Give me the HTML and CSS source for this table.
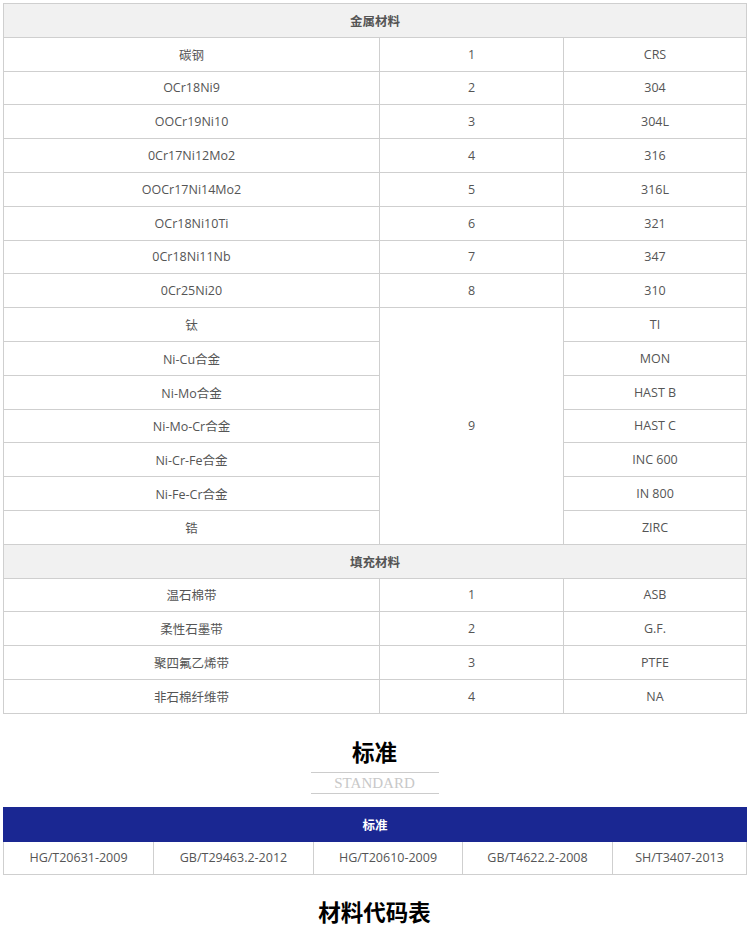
FILE: index.html
```html
<!DOCTYPE html>
<html lang="zh">
<head>
<meta charset="utf-8">
<title>材料代码表</title>
<link rel="stylesheet" href="styles.css">
</head>
<body>
<div class="page">
  <table class="mat">
    <colgroup><col class="c1"><col class="c2"><col class="c3"></colgroup>
    <tr class="head"><td colspan="3">金属材料</td></tr>
    <tr><td>碳钢</td><td>1</td><td>CRS</td></tr>
    <tr><td>OCr18Ni9</td><td>2</td><td>304</td></tr>
    <tr><td>OOCr19Ni10</td><td>3</td><td>304L</td></tr>
    <tr><td>0Cr17Ni12Mo2</td><td>4</td><td>316</td></tr>
    <tr><td>OOCr17Ni14Mo2</td><td>5</td><td>316L</td></tr>
    <tr><td>OCr18Ni10Ti</td><td>6</td><td>321</td></tr>
    <tr><td>0Cr18Ni11Nb</td><td>7</td><td>347</td></tr>
    <tr><td>0Cr25Ni20</td><td>8</td><td>310</td></tr>
    <tr><td>钛</td><td rowspan="7">9</td><td>TI</td></tr>
    <tr><td>Ni-Cu合金</td><td>MON</td></tr>
    <tr><td>Ni-Mo合金</td><td>HAST B</td></tr>
    <tr><td>Ni-Mo-Cr合金</td><td>HAST C</td></tr>
    <tr><td>Ni-Cr-Fe合金</td><td>INC 600</td></tr>
    <tr><td>Ni-Fe-Cr合金</td><td>IN 800</td></tr>
    <tr><td>锆</td><td>ZIRC</td></tr>
    <tr class="head"><td colspan="3">填充材料</td></tr>
    <tr><td>温石棉带</td><td>1</td><td>ASB</td></tr>
    <tr><td>柔性石墨带</td><td>2</td><td>G.F.</td></tr>
    <tr><td>聚四氟乙烯带</td><td>3</td><td>PTFE</td></tr>
    <tr><td>非石棉纤维带</td><td>4</td><td>NA</td></tr>
  </table>

  <div class="section-title">
    <h2>标准</h2>
    <div class="sub">STANDARD</div>
  </div>

  <table class="std">
    <colgroup><col class="s1"><col class="s2"><col class="s3"><col class="s4"><col class="s5"></colgroup>
    <tr class="blue"><td colspan="5">标准</td></tr>
    <tr><td>HG/T20631-2009</td><td>GB/T29463.2-2012</td><td>HG/T20610-2009</td><td>GB/T4622.2-2008</td><td>SH/T3407-2013</td></tr>
  </table>

  <div class="section-title last">
    <h2>材料代码表</h2>
  </div>
</div>
</body>
</html>
```

FILE: styles.css
```css
html, body {
  margin: 0;
  padding: 0;
  background: #fff;
}
body {
  font-family: "Open Sans", "Noto Sans CJK SC", sans-serif;
  font-size: 12.5px;
  color: #555;
}
.page {
  padding: 3px 4px 0 3px;
}
table {
  width: 743px;
  border-collapse: collapse;
  table-layout: fixed;
}
td {
  border: 1px solid #cfcfcf;
  text-align: center;
  vertical-align: middle;
  padding: 0;
}
.mat tr {
  height: 33.8px;
}
.mat .c1 { width: 376px; }
.mat .c2 { width: 184px; }
.mat .c3 { width: 183px; }
.std .s1 { width: 150px; }
.std .s2 { width: 160px; }
.std .s3 { width: 149px; }
.std .s4 { width: 150px; }
.std .s5 { width: 134px; }
.head td {
  background: #f1f1f1;
  font-weight: bold;
  color: #555;
}
.section-title {
  display: flex;
  flex-direction: column;
  align-items: center;
  padding-top: 22px;
  padding-bottom: 13px;
}
.section-title h2 {
  margin: 0;
  font-family: "Noto Sans CJK SC", sans-serif;
  font-size: 22.5px;
  line-height: 30px;
  font-weight: bold;
  color: #000;
}
.sub {
  margin-top: 6px;
  width: 128px;
  border-top: 1px solid #ccc;
  border-bottom: 1px solid #ccc;
  font-family: "Liberation Serif", serif;
  font-size: 15px;
  line-height: 20px;
  color: #c8c8c8;
  text-align: center;
}
.std tr {
  height: 33.8px;
}
.blue td {
  background: #1a2792;
  color: #fff;
  font-weight: bold;
  border-color: #1a2792;
}
.section-title.last {
  padding-top: 21px;
}
```
